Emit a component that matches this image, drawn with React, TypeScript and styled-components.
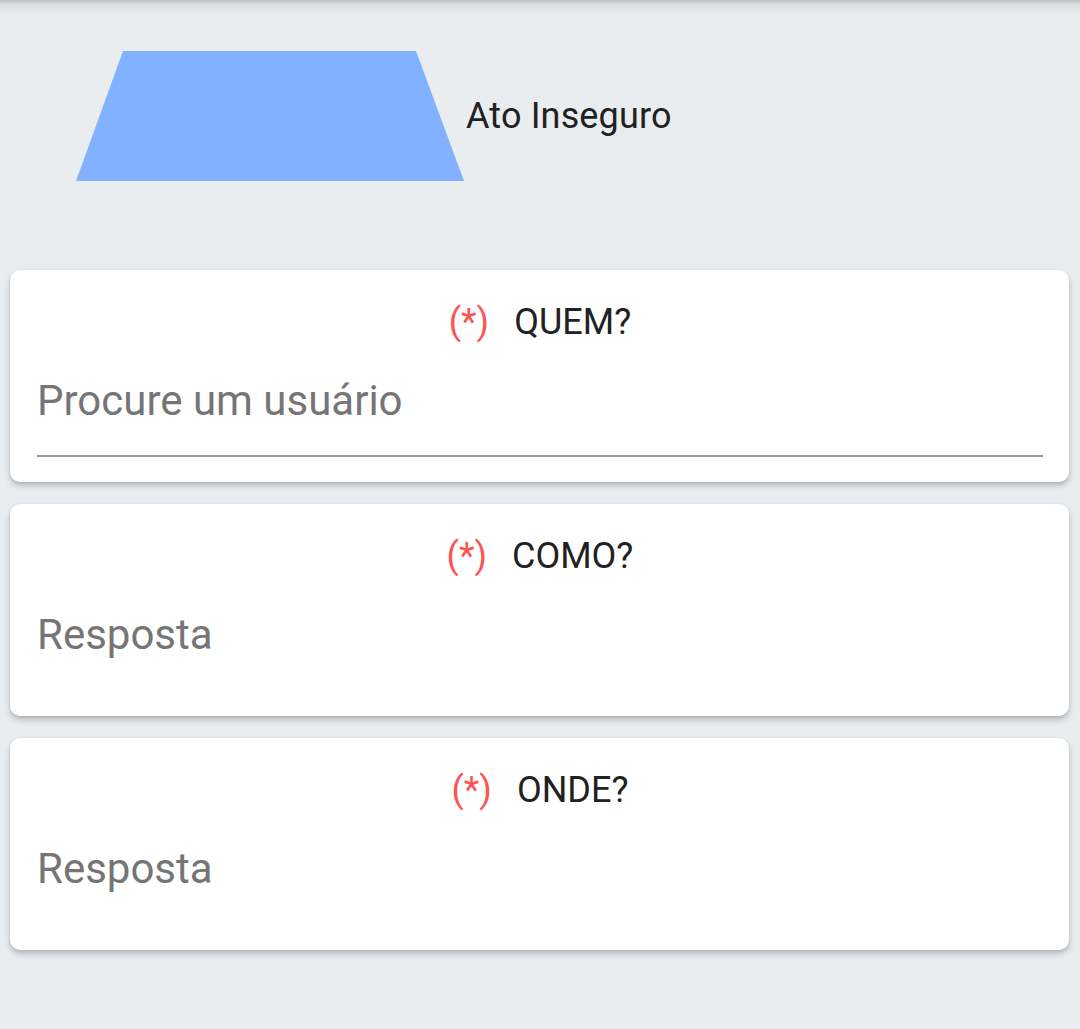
import React from "react";
import styled, { createGlobalStyle } from "styled-components";

const GlobalStyle = createGlobalStyle`
  html, body {
    margin: 0;
    padding: 0;
    background: #e9edf0;
  }
  body {
    font-family: Roboto, "Noto Sans", "Liberation Sans", sans-serif;
  }
  * { box-sizing: border-box; }
`;

const Page = styled.div`
  min-height: 1029px;
  background:
    linear-gradient(to bottom, rgba(0, 0, 0, 0.18) 0px, rgba(0, 0, 0, 0.06) 5px, rgba(0, 0, 0, 0) 16px),
    #e9edf0;
  padding: 51px 11px 40px 10px;
  display: flex;
  flex-direction: column;
`;

const TypeRow = styled.div`
  display: flex;
  align-items: center;
  gap: 2px;
  padding-left: 66px;
  margin-bottom: 89px;
`;

const TypeLabel = styled.span`
  font-size: 36px;
  line-height: 44px;
  letter-spacing: 0.15px;
  color: #212121;
`;

const CardList = styled.div`
  display: flex;
  flex-direction: column;
  gap: 22px;
`;

const Card = styled.div`
  background: #ffffff;
  border-radius: 10px;
  box-shadow: 0 4px 6px rgba(0, 0, 0, 0.2), 0 1px 3px rgba(0, 0, 0, 0.1);
  height: 212px;
  padding: 30px 26px 0 27px;
  display: flex;
  flex-direction: column;
`;

const Header = styled.div`
  display: flex;
  justify-content: center;
  align-items: center;
  gap: 25px;
  font-size: 36px;
  line-height: 44px;
  height: 44px;
`;

const Required = styled.span`
  color: #ff5252;
`;

const Question = styled.span`
  color: #212121;
`;

const Field = styled.input<{ $underlined?: boolean }>`
  margin-top: 31px;
  border: none;
  outline: none;
  background: transparent;
  padding: 0 0 30px 0;
  font-family: Roboto, "Noto Sans", "Liberation Sans", sans-serif;
  font-size: 42px;
  line-height: 50px;
  height: 82px;
  color: #212121;
  width: 100%;
  border-bottom: 2px solid ${(p) => (p.$underlined ? "#9a9a9a" : "transparent")};
  &::placeholder {
    color: #757575;
  }
`;

const Trapezoid = () => (
  <svg width="388" height="130" viewBox="0 0 388 130">
    <polygon points="47,0 340,0 388,130 0,130" fill="#82b1ff" />
  </svg>
);

const questions = [
  { label: "QUEM?", placeholder: "Procure um usuário", underlined: true },
  { label: "COMO?", placeholder: "Resposta", underlined: false },
  { label: "ONDE?", placeholder: "Resposta", underlined: false },
];

export default function App() {
  return (
    <>
      <GlobalStyle />
      <Page>
        <TypeRow>
          <Trapezoid />
          <TypeLabel>Ato Inseguro</TypeLabel>
        </TypeRow>
        <CardList>
          {questions.map((q) => (
            <Card key={q.label}>
              <Header>
                <Required>(*)</Required>
                <Question>{q.label}</Question>
              </Header>
              <Field placeholder={q.placeholder} $underlined={q.underlined} />
            </Card>
          ))}
        </CardList>
      </Page>
    </>
  );
}
